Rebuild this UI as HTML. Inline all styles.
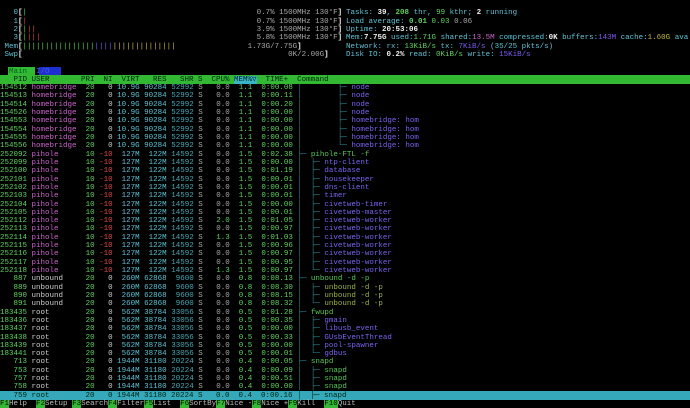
<!DOCTYPE html>
<html><head><meta charset="utf-8"><style>
html,body{margin:0;padding:0;background:#000;width:690px;height:408px;overflow:hidden}
body{position:relative;font-family:"Liberation Mono","DejaVu Sans Mono",monospace;font-size:7.5px;color:#bbb}
pre{margin:0;font:inherit;line-height:8.32px;white-space:pre;position:absolute;left:0}
.g{color:#5fd35f}.m{color:#c965c9}.c{color:#5ec4d6}.s{color:#4aa9b8}.d{color:#aaa}.w{color:#ccc}.r{color:#e04848}
.t{color:#2f8f9a}.p{color:#7a63f0}.gp{color:#55c855}.o{color:#9cb44a}.y{color:#c8b848}.b{color:#7a5cf0}.W{color:#eee;font-weight:bold}.B{color:#5cd25c;font-weight:bold}
.hd{position:absolute;left:0;top:75.2px;width:690px;height:8.32px;background:#33b833}
.sel{position:absolute;left:0;top:391.4px;width:690px;height:8.32px;background:#35a9b9}
.k{background:#33b833;color:#000}
</style></head><body>
<div class="hd"></div>
<div class="sel"></div>
<div style="position:absolute;left:8px;top:67px;width:27px;height:8.3px;background:#33b833"></div>
<div style="position:absolute;left:39px;top:67px;width:22px;height:8.3px;background:#1d2fd0"></div>
<pre style="top:1px">

<span class="c">   0</span><span class="W">[</span><span class="g">|</span>                                                   <span class="d">0.7% 1500MHz 130°F</span><span class="W">]</span>
<span class="c">   1</span><span class="W">[</span><span class="r">|</span>                                                   <span class="d">0.7% 1500MHz 130°F</span><span class="W">]</span>
<span class="c">   2</span><span class="W">[</span><span class="g">|</span><span class="r">||</span>                                                 <span class="d">3.9% 1500MHz 130°F</span><span class="W">]</span>
<span class="c">   3</span><span class="W">[</span><span class="g">|</span><span class="r">|||</span>                                                <span class="d">5.8% 1500MHz 130°F</span><span class="W">]</span>
<span class="c"> Mem</span><span class="W">[</span><span class="g">||||||||||||||||</span><span class="b">||||</span><span class="y">||||||||||||||</span>                <span class="d">1.73G/7.75G</span><span class="W">]</span>
<span class="c"> Swp</span><span class="W">[</span>                                                           <span class="d">0K/2.00G</span><span class="W">]</span>

<span style="color:#062">  Main  </span><span style="color:#4a5ae0">I/O</span>
<span style="color:#021">   PID USER       PRI  NI  VIRT   RES   SHR S  CPU% </span><span style="background:#38b6c8;color:#021">MEM%▽</span><span style="color:#021">  TIME+  Command</span>
<span class="g">154512</span> <span class="m">homebridge</span>  <span class="g">20</span>   <span class="w">0</span> <span class="c">10.9G</span> <span class="c">90284</span> <span class="s">52992</span> <span class="d">S</span>   <span class="d">0.0</span>  <span class="g">1.1</span>  <span class="g">0:00.08</span> <span class="t">│        ├─</span> <span class="p">node</span>
<span class="g">154513</span> <span class="m">homebridge</span>  <span class="g">20</span>   <span class="w">0</span> <span class="c">10.9G</span> <span class="c">90284</span> <span class="s">52992</span> <span class="d">S</span>   <span class="d">0.0</span>  <span class="g">1.1</span>  <span class="g">0:00.11</span> <span class="t">│        ├─</span> <span class="p">node</span>
<span class="g">154514</span> <span class="m">homebridge</span>  <span class="g">20</span>   <span class="w">0</span> <span class="c">10.9G</span> <span class="c">90284</span> <span class="s">52992</span> <span class="d">S</span>   <span class="d">0.0</span>  <span class="g">1.1</span>  <span class="g">0:00.20</span> <span class="t">│        ├─</span> <span class="p">node</span>
<span class="g">154526</span> <span class="m">homebridge</span>  <span class="g">20</span>   <span class="w">0</span> <span class="c">10.9G</span> <span class="c">90284</span> <span class="s">52992</span> <span class="d">S</span>   <span class="d">0.0</span>  <span class="g">1.1</span>  <span class="g">0:00.00</span> <span class="t">│        ├─</span> <span class="p">node</span>
<span class="g">154553</span> <span class="m">homebridge</span>  <span class="g">20</span>   <span class="w">0</span> <span class="c">10.9G</span> <span class="c">90284</span> <span class="s">52992</span> <span class="d">S</span>   <span class="d">0.0</span>  <span class="g">1.1</span>  <span class="g">0:00.00</span> <span class="t">│        ├─</span> <span class="p">homebridge: hom</span>
<span class="g">154554</span> <span class="m">homebridge</span>  <span class="g">20</span>   <span class="w">0</span> <span class="c">10.9G</span> <span class="c">90284</span> <span class="s">52992</span> <span class="d">S</span>   <span class="d">0.0</span>  <span class="g">1.1</span>  <span class="g">0:00.00</span> <span class="t">│        ├─</span> <span class="p">homebridge: hom</span>
<span class="g">154555</span> <span class="m">homebridge</span>  <span class="g">20</span>   <span class="w">0</span> <span class="c">10.9G</span> <span class="c">90284</span> <span class="s">52992</span> <span class="d">S</span>   <span class="d">0.0</span>  <span class="g">1.1</span>  <span class="g">0:00.00</span> <span class="t">│        ├─</span> <span class="p">homebridge: hom</span>
<span class="g">154556</span> <span class="m">homebridge</span>  <span class="g">20</span>   <span class="w">0</span> <span class="c">10.9G</span> <span class="c">90284</span> <span class="s">52992</span> <span class="d">S</span>   <span class="d">0.0</span>  <span class="g">1.1</span>  <span class="g">0:00.00</span> <span class="t">│        └─</span> <span class="p">homebridge: hom</span>
<span class="g">252092</span> <span class="m">pihole</span>      <span class="g">10</span> <span class="r">-10</span>  <span class="c">127M</span>  <span class="c">122M</span> <span class="s">14592</span> <span class="d">S</span>   <span class="d">0.0</span>  <span class="g">1.5</span>  <span class="g">0:02.38</span> <span class="t">├─</span> <span class="gp">pihole-FTL -f</span>
<span class="g">252099</span> <span class="m">pihole</span>      <span class="g">10</span> <span class="r">-10</span>  <span class="c">127M</span>  <span class="c">122M</span> <span class="s">14592</span> <span class="d">S</span>   <span class="d">0.0</span>  <span class="g">1.5</span>  <span class="g">0:00.00</span> <span class="t">│  ├─</span> <span class="p">ntp-client</span>
<span class="g">252100</span> <span class="m">pihole</span>      <span class="g">10</span> <span class="r">-10</span>  <span class="c">127M</span>  <span class="c">122M</span> <span class="s">14592</span> <span class="d">S</span>   <span class="d">0.0</span>  <span class="g">1.5</span>  <span class="g">0:01.19</span> <span class="t">│  ├─</span> <span class="p">database</span>
<span class="g">252101</span> <span class="m">pihole</span>      <span class="g">10</span> <span class="r">-10</span>  <span class="c">127M</span>  <span class="c">122M</span> <span class="s">14592</span> <span class="d">S</span>   <span class="d">0.0</span>  <span class="g">1.5</span>  <span class="g">0:00.01</span> <span class="t">│  ├─</span> <span class="p">housekeeper</span>
<span class="g">252102</span> <span class="m">pihole</span>      <span class="g">10</span> <span class="r">-10</span>  <span class="c">127M</span>  <span class="c">122M</span> <span class="s">14592</span> <span class="d">S</span>   <span class="d">0.0</span>  <span class="g">1.5</span>  <span class="g">0:00.01</span> <span class="t">│  ├─</span> <span class="p">dns-client</span>
<span class="g">252103</span> <span class="m">pihole</span>      <span class="g">10</span> <span class="r">-10</span>  <span class="c">127M</span>  <span class="c">122M</span> <span class="s">14592</span> <span class="d">S</span>   <span class="d">0.0</span>  <span class="g">1.5</span>  <span class="g">0:00.01</span> <span class="t">│  ├─</span> <span class="p">timer</span>
<span class="g">252104</span> <span class="m">pihole</span>      <span class="g">10</span> <span class="r">-10</span>  <span class="c">127M</span>  <span class="c">122M</span> <span class="s">14592</span> <span class="d">S</span>   <span class="d">0.0</span>  <span class="g">1.5</span>  <span class="g">0:00.00</span> <span class="t">│  ├─</span> <span class="p">civetweb-timer</span>
<span class="g">252105</span> <span class="m">pihole</span>      <span class="g">10</span> <span class="r">-10</span>  <span class="c">127M</span>  <span class="c">122M</span> <span class="s">14592</span> <span class="d">S</span>   <span class="d">0.0</span>  <span class="g">1.5</span>  <span class="g">0:00.01</span> <span class="t">│  ├─</span> <span class="p">civetweb-master</span>
<span class="g">252112</span> <span class="m">pihole</span>      <span class="g">10</span> <span class="r">-10</span>  <span class="c">127M</span>  <span class="c">122M</span> <span class="s">14592</span> <span class="d">S</span>   <span class="g">2.0</span>  <span class="g">1.5</span>  <span class="g">0:01.05</span> <span class="t">│  ├─</span> <span class="p">civetweb-worker</span>
<span class="g">252113</span> <span class="m">pihole</span>      <span class="g">10</span> <span class="r">-10</span>  <span class="c">127M</span>  <span class="c">122M</span> <span class="s">14592</span> <span class="d">S</span>   <span class="d">0.0</span>  <span class="g">1.5</span>  <span class="g">0:00.97</span> <span class="t">│  ├─</span> <span class="p">civetweb-worker</span>
<span class="g">252114</span> <span class="m">pihole</span>      <span class="g">10</span> <span class="r">-10</span>  <span class="c">127M</span>  <span class="c">122M</span> <span class="s">14592</span> <span class="d">S</span>   <span class="g">1.3</span>  <span class="g">1.5</span>  <span class="g">0:01.03</span> <span class="t">│  ├─</span> <span class="p">civetweb-worker</span>
<span class="g">252115</span> <span class="m">pihole</span>      <span class="g">10</span> <span class="r">-10</span>  <span class="c">127M</span>  <span class="c">122M</span> <span class="s">14592</span> <span class="d">S</span>   <span class="d">0.0</span>  <span class="g">1.5</span>  <span class="g">0:00.96</span> <span class="t">│  ├─</span> <span class="p">civetweb-worker</span>
<span class="g">252116</span> <span class="m">pihole</span>      <span class="g">10</span> <span class="r">-10</span>  <span class="c">127M</span>  <span class="c">122M</span> <span class="s">14592</span> <span class="d">S</span>   <span class="d">0.0</span>  <span class="g">1.5</span>  <span class="g">0:00.97</span> <span class="t">│  ├─</span> <span class="p">civetweb-worker</span>
<span class="g">252117</span> <span class="m">pihole</span>      <span class="g">10</span> <span class="r">-10</span>  <span class="c">127M</span>  <span class="c">122M</span> <span class="s">14592</span> <span class="d">S</span>   <span class="d">0.0</span>  <span class="g">1.5</span>  <span class="g">0:00.95</span> <span class="t">│  ├─</span> <span class="p">civetweb-worker</span>
<span class="g">252118</span> <span class="m">pihole</span>      <span class="g">10</span> <span class="r">-10</span>  <span class="c">127M</span>  <span class="c">122M</span> <span class="s">14592</span> <span class="d">S</span>   <span class="g">1.3</span>  <span class="g">1.5</span>  <span class="g">0:00.97</span> <span class="t">│  └─</span> <span class="p">civetweb-worker</span>
<span class="g">   887</span> <span class="w">unbound</span>     <span class="g">20</span>   <span class="w">0</span>  <span class="c">260M</span> <span class="c">62868</span>  <span class="s">9600</span> <span class="d">S</span>   <span class="d">0.0</span>  <span class="g">0.8</span>  <span class="g">0:08.13</span> <span class="t">├─</span> <span class="gp">unbound -d -p</span>
<span class="g">   889</span> <span class="w">unbound</span>     <span class="g">20</span>   <span class="w">0</span>  <span class="c">260M</span> <span class="c">62868</span>  <span class="s">9600</span> <span class="d">S</span>   <span class="d">0.0</span>  <span class="g">0.8</span>  <span class="g">0:08.30</span> <span class="t">│  ├─</span> <span class="o">unbound -d -p</span>
<span class="g">   890</span> <span class="w">unbound</span>     <span class="g">20</span>   <span class="w">0</span>  <span class="c">260M</span> <span class="c">62868</span>  <span class="s">9600</span> <span class="d">S</span>   <span class="d">0.0</span>  <span class="g">0.8</span>  <span class="g">0:08.15</span> <span class="t">│  ├─</span> <span class="o">unbound -d -p</span>
<span class="g">   891</span> <span class="w">unbound</span>     <span class="g">20</span>   <span class="w">0</span>  <span class="c">260M</span> <span class="c">62868</span>  <span class="s">9600</span> <span class="d">S</span>   <span class="d">0.0</span>  <span class="g">0.8</span>  <span class="g">0:08.32</span> <span class="t">│  └─</span> <span class="o">unbound -d -p</span>
<span class="g">183435</span> <span class="w">root</span>        <span class="g">20</span>   <span class="w">0</span>  <span class="c">562M</span> <span class="c">38784</span> <span class="s">33056</span> <span class="d">S</span>   <span class="d">0.0</span>  <span class="g">0.5</span>  <span class="g">0:01.28</span> <span class="t">├─</span> <span class="gp">fwupd</span>
<span class="g">183436</span> <span class="w">root</span>        <span class="g">20</span>   <span class="w">0</span>  <span class="c">562M</span> <span class="c">38784</span> <span class="s">33056</span> <span class="d">S</span>   <span class="d">0.0</span>  <span class="g">0.5</span>  <span class="g">0:00.35</span> <span class="t">│  ├─</span> <span class="p">gmain</span>
<span class="g">183437</span> <span class="w">root</span>        <span class="g">20</span>   <span class="w">0</span>  <span class="c">562M</span> <span class="c">38784</span> <span class="s">33056</span> <span class="d">S</span>   <span class="d">0.0</span>  <span class="g">0.5</span>  <span class="g">0:00.00</span> <span class="t">│  ├─</span> <span class="p">libusb_event</span>
<span class="g">183438</span> <span class="w">root</span>        <span class="g">20</span>   <span class="w">0</span>  <span class="c">562M</span> <span class="c">38784</span> <span class="s">33056</span> <span class="d">S</span>   <span class="d">0.0</span>  <span class="g">0.5</span>  <span class="g">0:00.33</span> <span class="t">│  ├─</span> <span class="p">GUsbEventThread</span>
<span class="g">183439</span> <span class="w">root</span>        <span class="g">20</span>   <span class="w">0</span>  <span class="c">562M</span> <span class="c">38784</span> <span class="s">33056</span> <span class="d">S</span>   <span class="d">0.0</span>  <span class="g">0.5</span>  <span class="g">0:00.00</span> <span class="t">│  ├─</span> <span class="p">pool-spawner</span>
<span class="g">183441</span> <span class="w">root</span>        <span class="g">20</span>   <span class="w">0</span>  <span class="c">562M</span> <span class="c">38784</span> <span class="s">33056</span> <span class="d">S</span>   <span class="d">0.0</span>  <span class="g">0.5</span>  <span class="g">0:00.01</span> <span class="t">│  └─</span> <span class="p">gdbus</span>
<span class="g">   713</span> <span class="w">root</span>        <span class="g">20</span>   <span class="w">0</span> <span class="c">1944M</span> <span class="c">31180</span> <span class="s">20224</span> <span class="d">S</span>   <span class="d">0.0</span>  <span class="g">0.4</span>  <span class="g">0:00.05</span> <span class="t">├─</span> <span class="gp">snapd</span>
<span class="g">   753</span> <span class="w">root</span>        <span class="g">20</span>   <span class="w">0</span> <span class="c">1944M</span> <span class="c">31180</span> <span class="s">20224</span> <span class="d">S</span>   <span class="d">0.0</span>  <span class="g">0.4</span>  <span class="g">0:00.09</span> <span class="t">│  ├─</span> <span class="gp">snapd</span>
<span class="g">   757</span> <span class="w">root</span>        <span class="g">20</span>   <span class="w">0</span> <span class="c">1944M</span> <span class="c">31180</span> <span class="s">20224</span> <span class="d">S</span>   <span class="d">0.0</span>  <span class="g">0.4</span>  <span class="g">0:00.51</span> <span class="t">│  ├─</span> <span class="gp">snapd</span>
<span class="g">   758</span> <span class="w">root</span>        <span class="g">20</span>   <span class="w">0</span> <span class="c">1944M</span> <span class="c">31180</span> <span class="s">20224</span> <span class="d">S</span>   <span class="d">0.0</span>  <span class="g">0.4</span>  <span class="g">0:00.00</span> <span class="t">│  ├─</span> <span class="gp">snapd</span>
<span style="color:#021">   759 root        20   0 1944M 31180 20224 S   0.0  0.4  0:00.16 │  ├─ snapd</span>
<span class="k">F1</span>Help  <span class="k">F2</span>Setup <span class="k">F3</span>Search<span class="k">F4</span>Filter<span class="k">F5</span>List  <span class="k">F6</span>SortBy<span class="k">F7</span>Nice -<span class="k">F8</span>Nice +<span class="k">F9</span>Kill  <span class="k">F10</span>Quit</pre>
<pre style="top:1px;left:346px;color:#5ec4d6">

Tasks: <span class="W">39</span>, <span class="B">208</span> thr, <span class="g">99</span> kthr; <span class="W">2</span> running
Load average: <span class="B">0.01</span> <span class="g">0.03</span> <span class="d">0.06</span>
Uptime: <span class="W">20:53:06</span>
Mem:<span class="W">7.75G</span> used:<span class="g">1.71G</span> shared:<span class="m">13.5M</span> compressed:<span class="W">0K</span> buffers:<span class="b">143M</span> cache:<span class="y">1.60G</span> ava
Network: rx: <span class="g">13KiB/s</span> tx: <span class="b">7KiB/s</span> (35/25 pkts/s)
Disk IO: <span class="W">0.2%</span> read: <span class="g">0KiB/s</span> write: <span class="b">15KiB/s</span></pre>
</body></html>
